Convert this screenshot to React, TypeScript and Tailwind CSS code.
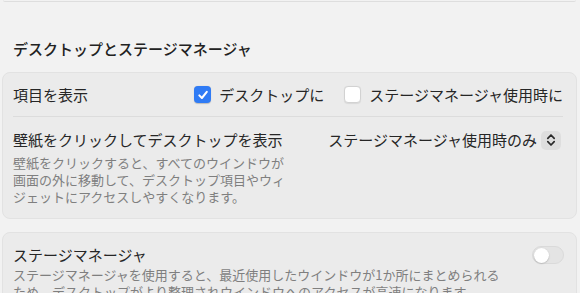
import React from "react";

const font = { fontFamily: '"Noto Sans CJK JP", "Noto Sans", sans-serif' };

function CheckedBox() {
  return (
    <div className="w-[17px] h-[17px] rounded-[4px] bg-[#2f7bf5] flex items-center justify-center shadow-[0_0.5px_1px_rgba(0,0,0,0.2)]">
      <svg width="12" height="12" viewBox="0 0 12 12" fill="none">
        <path d="M2.3 6.4 L4.9 9 L9.8 2.9" stroke="white" strokeWidth="2" strokeLinecap="round" strokeLinejoin="round" />
      </svg>
    </div>
  );
}

function EmptyBox() {
  return (
    <div className="w-[17px] h-[17px] rounded-[4px] bg-white border border-[#d2d2d2] shadow-[0_0.5px_1px_rgba(0,0,0,0.08)]" />
  );
}

function Stepper() {
  return (
    <div className="w-[20px] h-[19px] rounded-[5px] bg-[#dedede] flex items-center justify-center">
      <svg width="10" height="14" viewBox="0 0 10 14" fill="none">
        <path d="M1.8 5.3 L5 2 L8.2 5.3" stroke="#2a2a2a" strokeWidth="1.7" strokeLinecap="round" strokeLinejoin="round" />
        <path d="M1.8 8.7 L5 12 L8.2 8.7" stroke="#2a2a2a" strokeWidth="1.7" strokeLinecap="round" strokeLinejoin="round" />
      </svg>
    </div>
  );
}

function Toggle() {
  return (
    <div className="w-[32px] h-[18px] rounded-full bg-[#e4e4e4] border border-[#dadada] flex items-center px-[1px]">
      <div className="w-[15px] h-[15px] rounded-full bg-white shadow-[0_0.5px_1.5px_rgba(0,0,0,0.25)]" />
    </div>
  );
}

export default function App() {
  return (
    <div className="w-[580px] h-[293px] overflow-hidden bg-[#f2f2f2] text-[#262626]" style={font}>
      <div className="ml-[3px] w-[573px] h-[2px] border-b border-[#dedede] rounded-b-[6px]" />
      <div className="mt-[36px] ml-[13px] text-[15px] leading-[22px] font-medium text-[#222]">
        デスクトップとステージマネージャ
      </div>
      <div className="mt-[12px] ml-[2px] w-[575px] rounded-[8px] bg-[#ebebeb] border border-[#e2e2e2]">
        <div className="h-[43px] flex items-center justify-between pl-[10px] pr-[13px]">
          <div className="text-[15px] leading-[22px]">項目を表示</div>
          <div className="flex items-center">
            <CheckedBox />
            <span className="ml-[8px] text-[15px] leading-[22px]">デスクトップに</span>
            <div className="ml-[20px]">
              <EmptyBox />
            </div>
            <span className="ml-[8px] text-[15px] leading-[22px]">ステージマネージャ使用時に</span>
          </div>
        </div>
        <div className="ml-[10px] mr-[13px] border-t border-[#dcdcdc]" />
        <div className="pt-[12px] pb-[13px] pl-[10px] pr-[15px]">
          <div className="flex items-center justify-between">
            <div className="text-[15px] leading-[22px]">壁紙をクリックしてデスクトップを表示</div>
            <div className="flex items-center">
              <span className="text-[15px] leading-[22px]">ステージマネージャ使用時のみ</span>
              <div className="ml-[4px]">
                <Stepper />
              </div>
            </div>
          </div>
          <div className="mt-[3px] text-[13px] leading-[17px] text-[#7f7f7f]">
            壁紙をクリックすると、すべてのウインドウが
            <br />
            画面の外に移動して、デスクトップ項目やウィ
            <br />
            ジェットにアクセスしやすくなります。
          </div>
        </div>
      </div>
      <div className="mt-[13px] ml-[2px] w-[575px] rounded-[8px] bg-[#ebebeb] border border-[#e2e2e2] pt-[11px] pl-[10px] pr-[12px] pb-[10px]">
        <div className="flex items-center justify-between">
          <div className="text-[15px] leading-[22px]">ステージマネージャ</div>
          <Toggle />
        </div>
        <div className="text-[13px] leading-[17px] text-[#7f7f7f]">
          ステージマネージャを使用すると、最近使用したウインドウが1か所にまとめられる
          <br />
          ため、デスクトップがより整理されウインドウへのアクセスが高速になります。
        </div>
      </div>
    </div>
  );
}
